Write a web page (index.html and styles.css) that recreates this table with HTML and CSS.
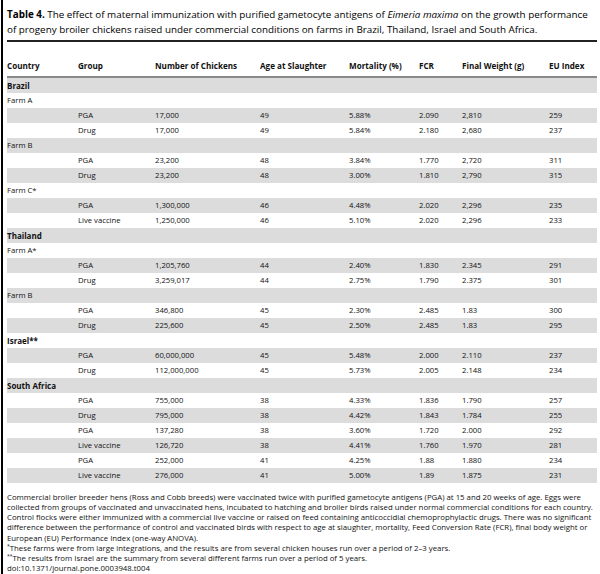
FILE: index.html
```html
<!DOCTYPE html>
<html>
<head>
<meta charset="utf-8">
<link rel="stylesheet" href="styles.css">
</head>
<body>
<div class="page">
  <div class="title"><b>Table 4.</b> The effect of maternal immunization with purified gametocyte antigens of <i>Eimeria maxima</i> on the growth performance of progeny broiler chickens raised under commercial conditions on farms in Brazil, Thailand, Israel and South Africa.</div>
  <div class="rule"></div>
  <table class="data">
    <thead>
      <tr><th class="c1">Country</th><th class="c2">Group</th><th class="c3">Number of Chickens</th><th class="c4">Age at Slaughter</th><th class="c5">Mortality (%)</th><th class="c6">FCR</th><th class="c7">Final Weight (g)</th><th class="c8">EU Index</th></tr>
    </thead>
    <tbody>
      <tr><td colspan="8" class="country">Brazil</td></tr>
      <tr><td colspan="8">Farm A</td></tr>
      <tr><td></td><td>PGA</td><td>17,000</td><td>49</td><td>5.88%</td><td>2.090</td><td>2,810</td><td>259</td></tr>
      <tr><td></td><td>Drug</td><td>17,000</td><td>49</td><td>5.84%</td><td>2.180</td><td>2,680</td><td>237</td></tr>
      <tr><td colspan="8">Farm B</td></tr>
      <tr><td></td><td>PGA</td><td>23,200</td><td>48</td><td>3.84%</td><td>1.770</td><td>2,720</td><td>311</td></tr>
      <tr><td></td><td>Drug</td><td>23,200</td><td>48</td><td>3.00%</td><td>1.810</td><td>2,790</td><td>315</td></tr>
      <tr><td colspan="8">Farm C*</td></tr>
      <tr><td></td><td>PGA</td><td>1,300,000</td><td>46</td><td>4.48%</td><td>2.020</td><td>2,296</td><td>235</td></tr>
      <tr><td></td><td>Live vaccine</td><td>1,250,000</td><td>46</td><td>5.10%</td><td>2.020</td><td>2,296</td><td>233</td></tr>
      <tr><td colspan="8" class="country">Thailand</td></tr>
      <tr><td colspan="8">Farm A*</td></tr>
      <tr><td></td><td>PGA</td><td>1,205,760</td><td>44</td><td>2.40%</td><td>1.830</td><td>2.345</td><td>291</td></tr>
      <tr><td></td><td>Drug</td><td>3,259,017</td><td>44</td><td>2.75%</td><td>1.790</td><td>2.375</td><td>301</td></tr>
      <tr><td colspan="8">Farm B</td></tr>
      <tr><td></td><td>PGA</td><td>346,800</td><td>45</td><td>2.30%</td><td>2.485</td><td>1.83</td><td>300</td></tr>
      <tr><td></td><td>Drug</td><td>225,600</td><td>45</td><td>2.50%</td><td>2.485</td><td>1.83</td><td>295</td></tr>
      <tr><td colspan="8" class="country">Israel**</td></tr>
      <tr><td></td><td>PGA</td><td>60,000,000</td><td>45</td><td>5.48%</td><td>2.000</td><td>2.110</td><td>237</td></tr>
      <tr><td></td><td>Drug</td><td>112,000,000</td><td>45</td><td>5.73%</td><td>2.005</td><td>2.148</td><td>234</td></tr>
      <tr><td colspan="8" class="country">South Africa</td></tr>
      <tr><td></td><td>PGA</td><td>755,000</td><td>38</td><td>4.33%</td><td>1.836</td><td>1.790</td><td>257</td></tr>
      <tr><td></td><td>Drug</td><td>795,000</td><td>38</td><td>4.42%</td><td>1.843</td><td>1.784</td><td>255</td></tr>
      <tr><td></td><td>PGA</td><td>137,280</td><td>38</td><td>3.60%</td><td>1.720</td><td>2.000</td><td>292</td></tr>
      <tr><td></td><td>Live vaccine</td><td>126,720</td><td>38</td><td>4.41%</td><td>1.760</td><td>1.970</td><td>281</td></tr>
      <tr><td></td><td>PGA</td><td>252,000</td><td>41</td><td>4.25%</td><td>1.88</td><td>1.880</td><td>234</td></tr>
      <tr><td></td><td>Live vaccine</td><td>276,000</td><td>41</td><td>5.00%</td><td>1.89</td><td>1.875</td><td>231</td></tr>
    </tbody>
  </table>
  <div class="notes">
    <p>Commercial broiler breeder hens (Ross and Cobb breeds) were vaccinated twice with purified gametocyte antigens (PGA) at 15 and 20 weeks of age. Eggs were<br>collected from groups of vaccinated and unvaccinated hens, incubated to hatching and broiler birds raised under normal commercial conditions for each country.<br>Control flocks were either immunized with a commercial live vaccine or raised on feed containing anticoccidial chemoprophylactic drugs. There was no significant<br>difference between the performance of control and vaccinated birds with respect to age at slaughter, mortality, Feed Conversion Rate (FCR), final body weight or<br>European (EU) Performance Index (one-way ANOVA).</p>
    <p><sup>*</sup>These farms were from large integrations, and the results are from several chicken houses run over a period of 2–3 years.</p>
    <p><sup>**</sup>The results from Israel are the summary from several different farms run over a period of 5 years.</p>
    <p>doi:10.1371/journal.pone.0003948.t004</p>
  </div>
</div>
</body>
</html>
```
FILE: styles.css
```css
html, body {
  margin: 0;
  padding: 0;
  background: #fff;
}
body {
  font-family: "Open Sans", "Noto Sans", sans-serif;
  color: #111;
}
.page {
  margin-left: 1px;
  border-left: 2px solid #000;
  padding: 7px 3px 0 4px;
  height: 574px;
  box-sizing: border-box;
  overflow: hidden;
}
.title {
  font-size: 9.85px;
  line-height: 15px;
  color: #000;
}
.rule {
  height: 2px;
  background: #222;
  margin-top: 3px;
}
table.data {
  width: 590px;
  border-collapse: collapse;
  table-layout: fixed;
  font-size: 7.7px;
}
th.c1 { width: 71px; }
th.c2 { width: 77px; }
th.c3 { width: 105px; }
th.c4 { width: 89px; }
th.c5 { width: 70px; }
th.c6 { width: 43px; }
th.c7 { width: 87px; }
th.c8 { width: 48px; }
thead th {
  text-align: left;
  font-weight: 700;
  font-size: 8.1px;
  padding: 19px 0 6px 0;
  height: 9px;
  line-height: 9px;
  border-bottom: 2px solid #8a8a8a;
  white-space: nowrap;
}
tbody td {
  height: 15px;
  line-height: 15px;
  padding: 0;
  white-space: nowrap;
  vertical-align: middle;
}
tbody tr:nth-child(odd) td {
  background: #dcdcdd;
}
td.country {
  font-weight: 700;
  font-size: 8px;
}
.notes {
  margin-top: 9px;
  font-size: 7.8px;
  line-height: 10.15px;
  color: #111;
  white-space: nowrap;
}
.notes p {
  margin: 0;
}
.notes sup {
  font-size: 5px;
  line-height: 0;
  vertical-align: 3px;
}
```
